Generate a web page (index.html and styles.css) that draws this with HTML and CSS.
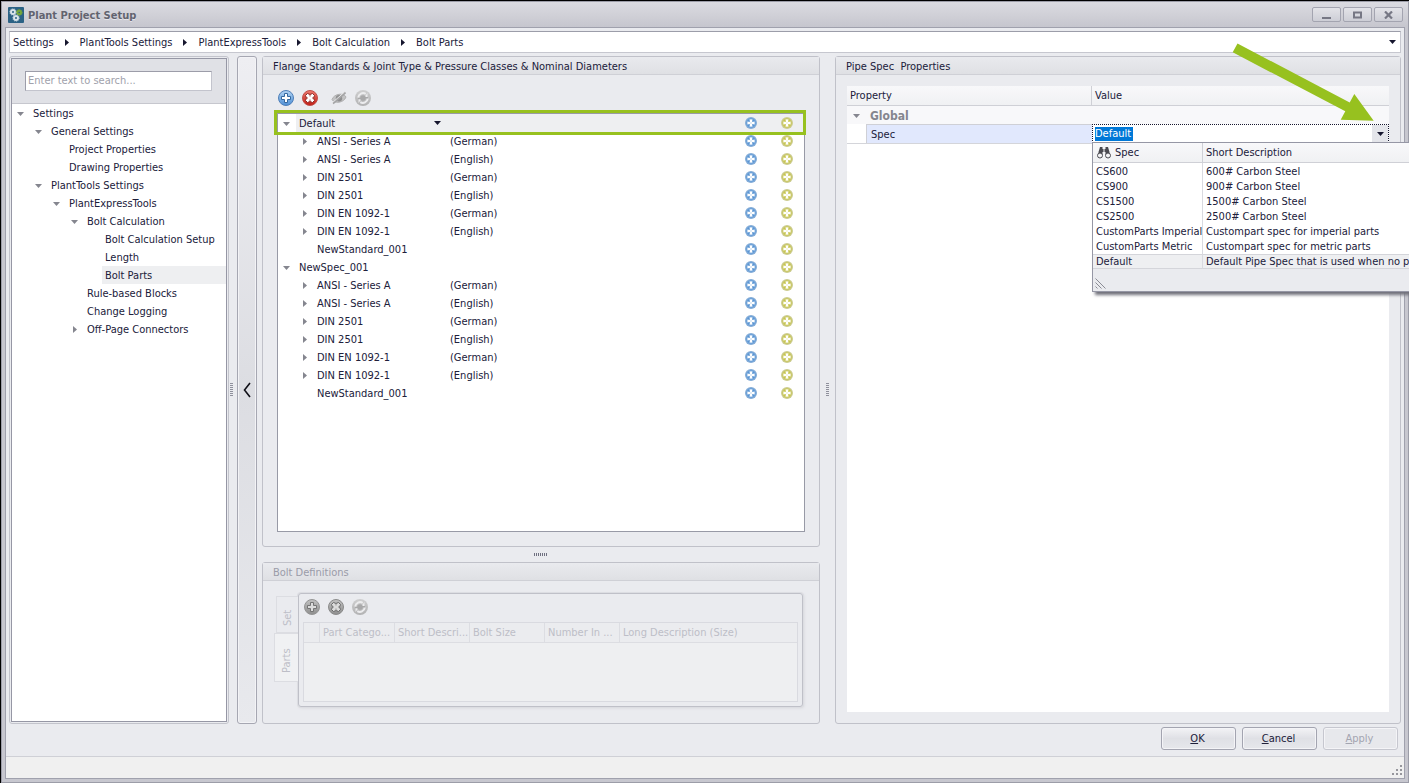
FILE: index.html
```html
<!DOCTYPE html>
<html lang="en">
<head>
<meta charset="utf-8">
<title>Plant Project Setup</title>
<link rel="stylesheet" href="styles.css">
</head>
<body>
<svg class="sprite" aria-hidden="true">
  <defs>
    <linearGradient id="gBlue" x1="0" y1="0" x2="0" y2="1"><stop offset="0" stop-color="#b4d4f3"/><stop offset="1" stop-color="#4d8fd6"/></linearGradient>
    <linearGradient id="gRed" x1="0" y1="0" x2="0" y2="1"><stop offset="0" stop-color="#ee7a70"/><stop offset="1" stop-color="#c01c14"/></linearGradient>
    <linearGradient id="gGray" x1="0" y1="0" x2="0" y2="1"><stop offset="0" stop-color="#c2c2c2"/><stop offset="1" stop-color="#8e8e8e"/></linearGradient>
    <linearGradient id="gPale" x1="0" y1="0" x2="0" y2="1"><stop offset="0" stop-color="#cfcfd0"/><stop offset="1" stop-color="#b2b2b3"/></linearGradient>
    <radialGradient id="gRowBlue"><stop offset="0" stop-color="#4484c8"/><stop offset="0.7" stop-color="#5a96d4"/><stop offset="1" stop-color="#7eaadb"/></radialGradient>
    <radialGradient id="gRowLime"><stop offset="0" stop-color="#bcba34"/><stop offset="0.7" stop-color="#c8c650"/><stop offset="1" stop-color="#cbca80"/></radialGradient>
  </defs>
  <symbol id="open" viewBox="0 0 7 4"><path d="M0 0h7L3.5 4z" fill="currentColor"/></symbol>
  <symbol id="closed" viewBox="0 0 4 7"><path d="M0 0v7l4-3.5z" fill="currentColor"/></symbol>
  <symbol id="plus" viewBox="0 0 16 16"><circle cx="8" cy="8" r="7.5" fill="url(#gBlue)" stroke="#4f7fb8"/><path d="M6.5 3.5h3v3h3v3h-3v3h-3v-3h-3v-3h3z" fill="#fff" stroke="#35689f"/></symbol>
  <symbol id="cross" viewBox="0 0 16 16"><circle cx="8" cy="8" r="7.5" fill="url(#gRed)" stroke="#c0504a"/><path d="M3.500 5.500L5.500 3.500 8 4.500 10.500 3.500 12.500 5.500 11.500 8 12.500 10.500 10.500 12.500 8 11.500 5.500 12.500 3.500 10.500 4.500 8z" fill="#fff" stroke="#8c2a26"/><path d="M8 4.500v2M8 11.500v-2M4.500 8h1.500M11.500 8h-1.500" stroke="#b8524c"/></symbol>
  <symbol id="plusGray" viewBox="0 0 16 16"><circle cx="8" cy="8" r="7.500" fill="url(#gGray)" stroke="#949494"/><path d="M6.500 3.500h3v3h3v3h-3v3h-3v-3h-3v-3h3z" fill="#dcdcdc" stroke="#757575"/></symbol>
  <symbol id="crossGray" viewBox="0 0 16 16"><circle cx="8" cy="8" r="7.500" fill="url(#gGray)" stroke="#8a8a8a"/><path d="M3.500 5.500L5.500 3.500 8 4.500 10.500 3.500 12.500 5.500 11.500 8 12.500 10.500 10.500 12.500 8 11.500 5.500 12.500 3.500 10.500 4.500 8z" fill="#dcdcdc" stroke="#686868"/><path d="M8 4.500v2M8 11.500v-2M4.500 8h1.500M11.500 8h-1.500" stroke="#909090"/></symbol>
  <symbol id="refresh" viewBox="0 0 16 16"><circle cx="8" cy="8" r="8" fill="url(#gPale)"/><path d="M3.200 7.500a4.900 4.900 0 0 1 7.500-3.600M12.800 8.500a4.900 4.900 0 0 1-7.500 3.600" fill="none" stroke="#ececee" stroke-width="2"/><path d="M12.500 3v4h-3zM3.500 13V9h3z" fill="#ececee"/><circle cx="8" cy="8" r="2.800" fill="#a9a9aa"/><path d="M9 7h4v1.200H9zM3 8h4v1.200H3z" fill="#a9a9aa"/></symbol>
  <symbol id="eyeOff" viewBox="0 0 16 16"><path d="M1 9.500c2-6 12-7 14-2.500-2 6-12 7-14 2.500z" fill="#c3c3c4" stroke="#b0b0b1"/><circle cx="8" cy="8.200" r="3.200" fill="#8f8f90"/><path d="M14.500 2.500L2 13.500" stroke="#a3a3a4" stroke-width="1.800"/><path d="M13.500 2L1 13" stroke="#e4e4e5"/></symbol>
  <symbol id="addBlue" viewBox="0 0 12 12"><circle cx="6" cy="6" r="6" fill="#86add6"/><circle cx="6" cy="6" r="5.200" fill="url(#gRowBlue)"/><path d="M4 2h4v2h2v4H8v2H4V8H2V4h2z" fill="#fff" fill-opacity=".3"/><path d="M5 2.500h2V5h2.500v2H7v2.500H5V7H2.500V5H5z" fill="#fff"/><path d="M5.500 5.500h1v1h-1z" fill="#8db6e0"/></symbol>
  <symbol id="addLime" viewBox="0 0 12 12"><circle cx="6" cy="6" r="6" fill="#cdcd96"/><circle cx="6" cy="6" r="5.200" fill="url(#gRowLime)"/><path d="M4 2h4v2h2v4H8v2H4V8H2V4h2z" fill="#fff" fill-opacity=".3"/><path d="M5 2.500h2V5h2.500v2H7v2.500H5V7H2.500V5H5z" fill="#fff"/><path d="M5.500 5.500h1v1h-1z" fill="#dbd98c"/></symbol>
  <symbol id="crumb" viewBox="0 0 4 7"><path d="M0 0v7l4-3.500z" fill="#16162e"/></symbol>
</svg>

<div class="window">
  <header class="titlebar">
    <svg class="app-icon" viewBox="0 0 16 16"><rect width="16" height="16" rx="1" fill="#2b6285"/><g fill="none" stroke-width="2"><circle cx="5" cy="5" r="2" stroke="#d9e4ea"/><circle cx="11.200" cy="5.500" r="1.800" stroke="#76a83a"/><circle cx="8" cy="11" r="2" stroke="#d9e4ea"/></g><g fill="none" stroke-dasharray="1 1" stroke-width="1"><circle cx="5" cy="5" r="3.200" stroke="#c5d5de"/><circle cx="11.200" cy="5.500" r="3" stroke="#76a83a"/><circle cx="8" cy="11" r="3.200" stroke="#c5d5de"/></g></svg>
    <h1>Plant Project Setup</h1>
    <div class="window-buttons">
      <button aria-label="Minimize"><svg width="10" height="8" viewBox="0 0 10 8"><path d="M0 6h9v2H0z" fill="#767784"/></svg></button>
      <button aria-label="Maximize"><svg width="10" height="8" viewBox="0 0 10 8"><path d="M1 1.500h7v5H1z" fill="none" stroke="#767784" stroke-width="2"/></svg></button>
      <button aria-label="Close"><svg width="10" height="8" viewBox="0 0 10 8"><path d="M1 .5l7 7M8 .5l-7 7" stroke="#767784" stroke-width="2.200"/></svg></button>
    </div>
  </header>

  <div class="client">
    <nav class="breadcrumb" aria-label="Breadcrumb">
      <a href="#">Settings</a><svg><use href="#crumb"/></svg>
      <a href="#">PlantTools Settings</a><svg><use href="#crumb"/></svg>
      <a href="#">PlantExpressTools</a><svg><use href="#crumb"/></svg>
      <a href="#">Bolt Calculation</a><svg><use href="#crumb"/></svg>
      <a href="#">Bolt Parts</a>
      <button class="crumb-menu" aria-label="History"><svg class="down"><use href="#open"/></svg></button>
    </nav>

    <main class="main">
      <aside class="nav-panel">
        <div class="nav-inner">
          <div class="search"><input type="text" placeholder="Enter text to search..." aria-label="Search settings"></div>
          <ul class="tree">
            <li class="node l1"><button class="exp" aria-label="Collapse"><svg class="down"><use href="#open"/></svg></button><a href="#">Settings</a></li>
            <li class="node l2"><button class="exp" aria-label="Collapse"><svg class="down"><use href="#open"/></svg></button><a href="#">General Settings</a></li>
            <li class="node l4"><a href="#">Project Properties</a></li>
            <li class="node l4"><a href="#">Drawing Properties</a></li>
            <li class="node l2"><button class="exp" aria-label="Collapse"><svg class="down"><use href="#open"/></svg></button><a href="#">PlantTools Settings</a></li>
            <li class="node l3"><button class="exp" aria-label="Collapse"><svg class="down"><use href="#open"/></svg></button><a href="#">PlantExpressTools</a></li>
            <li class="node l4"><button class="exp" aria-label="Collapse"><svg class="down"><use href="#open"/></svg></button><a href="#">Bolt Calculation</a></li>
            <li class="node l6"><a href="#">Bolt Calculation Setup</a></li>
            <li class="node l6"><a href="#">Length</a></li>
            <li class="node l6"><a href="#" class="current">Bolt Parts</a></li>
            <li class="node l5"><a href="#">Rule-based Blocks</a></li>
            <li class="node l5"><a href="#">Change Logging</a></li>
            <li class="node l4"><button class="exp shut" aria-label="Expand"><svg class="right"><use href="#closed"/></svg></button><a href="#">Off-Page Connectors</a></li>
          </ul>
        </div>
      </aside>

      <div class="split-v nav-split"><span class="grip-v"></span></div>
      <button class="collapse" aria-label="Collapse navigation"><svg width="8" height="16" viewBox="0 0 8 16"><path d="M7 1L1.500 8 7 15" fill="none" stroke="#101018" stroke-width="1.600"/></svg></button>

      <div class="center">
        <section class="group standards">
          <h2>Flange Standards &amp; Joint Type &amp; Pressure Classes &amp; Nominal Diameters</h2>
          <div class="standards-body">
            <div class="toolbar">
              <button aria-label="Add"><svg><use href="#plus"/></svg></button>
              <button aria-label="Delete"><svg><use href="#cross"/></svg></button>
              <button class="spaced" aria-label="Hide" disabled><svg><use href="#eyeOff"/></svg></button>
              <button aria-label="Refresh" disabled><svg><use href="#refresh"/></svg></button>
            </div>
            <div class="list">
              <div class="row focus"><div class="name l1"><button class="exp" aria-label="Collapse"><svg class="down"><use href="#open"/></svg></button><span>Default</span><button class="pick" aria-label="Choose spec"><svg class="down"><use href="#open"/></svg></button></div><span class="lang"></span><button aria-label="Add standard"><svg><use href="#addBlue"/></svg></button><button aria-label="Add copy"><svg><use href="#addLime"/></svg></button></div>
              <div class="row"><div class="name l2"><button class="exp shut" aria-label="Expand"><svg class="right"><use href="#closed"/></svg></button><span>ANSI - Series A</span></div><span class="lang">(German)</span><button aria-label="Add"><svg><use href="#addBlue"/></svg></button><button aria-label="Add copy"><svg><use href="#addLime"/></svg></button></div>
              <div class="row"><div class="name l2"><button class="exp shut" aria-label="Expand"><svg class="right"><use href="#closed"/></svg></button><span>ANSI - Series A</span></div><span class="lang">(English)</span><button aria-label="Add"><svg><use href="#addBlue"/></svg></button><button aria-label="Add copy"><svg><use href="#addLime"/></svg></button></div>
              <div class="row"><div class="name l2"><button class="exp shut" aria-label="Expand"><svg class="right"><use href="#closed"/></svg></button><span>DIN 2501</span></div><span class="lang">(German)</span><button aria-label="Add"><svg><use href="#addBlue"/></svg></button><button aria-label="Add copy"><svg><use href="#addLime"/></svg></button></div>
              <div class="row"><div class="name l2"><button class="exp shut" aria-label="Expand"><svg class="right"><use href="#closed"/></svg></button><span>DIN 2501</span></div><span class="lang">(English)</span><button aria-label="Add"><svg><use href="#addBlue"/></svg></button><button aria-label="Add copy"><svg><use href="#addLime"/></svg></button></div>
              <div class="row"><div class="name l2"><button class="exp shut" aria-label="Expand"><svg class="right"><use href="#closed"/></svg></button><span>DIN EN 1092-1</span></div><span class="lang">(German)</span><button aria-label="Add"><svg><use href="#addBlue"/></svg></button><button aria-label="Add copy"><svg><use href="#addLime"/></svg></button></div>
              <div class="row"><div class="name l2"><button class="exp shut" aria-label="Expand"><svg class="right"><use href="#closed"/></svg></button><span>DIN EN 1092-1</span></div><span class="lang">(English)</span><button aria-label="Add"><svg><use href="#addBlue"/></svg></button><button aria-label="Add copy"><svg><use href="#addLime"/></svg></button></div>
              <div class="row"><div class="name l3"><span>NewStandard_001</span></div><span class="lang"></span><button aria-label="Add"><svg><use href="#addBlue"/></svg></button><button aria-label="Add copy"><svg><use href="#addLime"/></svg></button></div>
              <div class="row"><div class="name l1"><button class="exp" aria-label="Collapse"><svg class="down"><use href="#open"/></svg></button><span>NewSpec_001</span></div><span class="lang"></span><button aria-label="Add standard"><svg><use href="#addBlue"/></svg></button><button aria-label="Add copy"><svg><use href="#addLime"/></svg></button></div>
              <div class="row"><div class="name l2"><button class="exp shut" aria-label="Expand"><svg class="right"><use href="#closed"/></svg></button><span>ANSI - Series A</span></div><span class="lang">(German)</span><button aria-label="Add"><svg><use href="#addBlue"/></svg></button><button aria-label="Add copy"><svg><use href="#addLime"/></svg></button></div>
              <div class="row"><div class="name l2"><button class="exp shut" aria-label="Expand"><svg class="right"><use href="#closed"/></svg></button><span>ANSI - Series A</span></div><span class="lang">(English)</span><button aria-label="Add"><svg><use href="#addBlue"/></svg></button><button aria-label="Add copy"><svg><use href="#addLime"/></svg></button></div>
              <div class="row"><div class="name l2"><button class="exp shut" aria-label="Expand"><svg class="right"><use href="#closed"/></svg></button><span>DIN 2501</span></div><span class="lang">(German)</span><button aria-label="Add"><svg><use href="#addBlue"/></svg></button><button aria-label="Add copy"><svg><use href="#addLime"/></svg></button></div>
              <div class="row"><div class="name l2"><button class="exp shut" aria-label="Expand"><svg class="right"><use href="#closed"/></svg></button><span>DIN 2501</span></div><span class="lang">(English)</span><button aria-label="Add"><svg><use href="#addBlue"/></svg></button><button aria-label="Add copy"><svg><use href="#addLime"/></svg></button></div>
              <div class="row"><div class="name l2"><button class="exp shut" aria-label="Expand"><svg class="right"><use href="#closed"/></svg></button><span>DIN EN 1092-1</span></div><span class="lang">(German)</span><button aria-label="Add"><svg><use href="#addBlue"/></svg></button><button aria-label="Add copy"><svg><use href="#addLime"/></svg></button></div>
              <div class="row"><div class="name l2"><button class="exp shut" aria-label="Expand"><svg class="right"><use href="#closed"/></svg></button><span>DIN EN 1092-1</span></div><span class="lang">(English)</span><button aria-label="Add"><svg><use href="#addBlue"/></svg></button><button aria-label="Add copy"><svg><use href="#addLime"/></svg></button></div>
              <div class="row"><div class="name l3"><span>NewStandard_001</span></div><span class="lang"></span><button aria-label="Add"><svg><use href="#addBlue"/></svg></button><button aria-label="Add copy"><svg><use href="#addLime"/></svg></button></div>
              <div class="highlight"></div>
            </div>
          </div>
        </section>

        <div class="split-h"><span class="grip-h"></span></div>

        <section class="group bolts">
          <h2>Bolt Definitions</h2>
          <div class="bolts-body">
            <div class="side-tabs" role="tablist">
              <button class="tab" role="tab" disabled>Set</button>
              <button class="tab active" role="tab" disabled>Parts</button>
            </div>
            <div class="tab-page">
              <div class="toolbar">
                <button aria-label="Add part" disabled><svg><use href="#plusGray"/></svg></button>
                <button aria-label="Delete part" disabled><svg><use href="#crossGray"/></svg></button>
                <button aria-label="Refresh parts" disabled><svg><use href="#refresh"/></svg></button>
              </div>
              <div class="parts">
                <table>
                  <thead><tr><th class="mark"></th><th>Part Catego...</th><th>Short Descri...</th><th>Bolt Size</th><th>Number In ...</th><th class="wide">Long Description (Size)</th></tr></thead>
                </table>
              </div>
            </div>
          </div>
        </section>
      </div>

      <div class="split-v"><span class="grip-v"></span></div>

      <section class="group props">
        <h2>Pipe Spec&nbsp; Properties</h2>
        <div class="props-body">
          <div class="grid">
            <div class="grid-head"><span>Property</span><span class="value-head">Value</span></div>
            <div class="category"><button class="exp" aria-label="Collapse"><svg class="down"><use href="#open"/></svg></button><strong>Global</strong></div>
            <div class="prop">
              <label for="spec">Spec</label>
              <div class="combo">
                <input id="spec" type="text" value="Default">
                <button aria-label="Open list"><svg class="down"><use href="#open"/></svg></button>
                <div class="popup">
                  <table>
                    <thead><tr><th class="key"><svg class="binoculars" viewBox="0 0 14 13"><path d="M3 1h2.500v2h3V1H11l1.500 5v3H8.500V6h-3v3h-4V6z" fill="#4a4a50"/><path d="M7 0v13" stroke="#f4f4f6"/><circle cx="3" cy="9.500" r="2.500" fill="#f4f4f6" stroke="#4a4a50"/><circle cx="11" cy="9.500" r="2.500" fill="#f4f4f6" stroke="#4a4a50"/></svg>Spec</th><th>Short Description</th></tr></thead>
                    <tbody>
                      <tr><td>CS600</td><td>600# Carbon Steel</td></tr>
                      <tr><td>CS900</td><td>900# Carbon Steel</td></tr>
                      <tr><td>CS1500</td><td>1500# Carbon Steel</td></tr>
                      <tr><td>CS2500</td><td>2500# Carbon Steel</td></tr>
                      <tr><td>CustomParts Imperial</td><td>Custompart spec for imperial parts</td></tr>
                      <tr><td>CustomParts Metric</td><td>Custompart spec for metric parts</td></tr>
                      <tr class="selected"><td>Default</td><td>Default Pipe Spec that is used when no pa</td></tr>
                    </tbody>
                  </table>
                  <div class="popup-foot"><svg width="11" height="11" viewBox="0 0 11 11"><path d="M0.500 0.500l10 10M0.500 4.500l6 6M0.500 8.500l2 2" stroke="#8a8b94" fill="none"/></svg></div>
                </div>
              </div>
            </div>
          </div>
        </div>
        <svg class="arrow" viewBox="0 0 143 79"><path d="M5.500 .5L117.700 59.500 122.300 51 141.700 77.700 108.700 76.700 113.300 68.300 .7 9.300z" fill="#97c11f"/></svg>
      </section>
    </main>

    <div class="actions">
      <button><u>O</u>K</button>
      <button><u>C</u>ancel</button>
      <button disabled><u>A</u>pply</button>
    </div>
    <footer class="status"><svg width="11" height="11" viewBox="0 0 11 11"><path d="M8 0h2v2H8zM4 4h2v2H4zM8 4h2v2H8zM0 8h2v2H0zM4 8h2v2H4zM8 8h2v2H8z" fill="#96969c"/></svg></footer>
  </div>
</div>
</body>
</html>
```

FILE: styles.css
```css
* { box-sizing: border-box; }

body {
  margin: 0;
  height: 100vh;
  overflow: hidden;
  border: solid #000;
  border-width: 1px 0 0 1px;
  font: 11px/20px "DejaVu Sans Condensed", "Noto Sans", sans-serif;
  color: #20203a;
}

button, input { font: inherit; color: inherit; }
button { padding: 0; border: 0; background: none; }
a { color: inherit; text-decoration: none; }
h1, h2, ul { margin: 0; padding: 0; font-size: inherit; }
svg { display: block; flex: none; }
.sprite { position: absolute; width: 0; height: 0; }
.down { width: 7px; height: 4px; }
.right { width: 4px; height: 7px; }

.window {
  display: flex;
  flex-direction: column;
  height: 100%;
  padding: 0 3px 3px;
  border: 1px solid #9c9da8;
  background: #c7c7cf;
}

.titlebar {
  display: flex;
  align-items: center;
  gap: 4px;
  height: 25px;
  margin: 0 -3px;
  padding: 0 5px 0 6px;
  background: linear-gradient(#dbdbe1, #c6c6ce);
}
.titlebar h1 { flex: 1; padding-top: 2px; color: #62636f; text-shadow: 0 1px #e4e4ea; }
.app-icon { width: 16px; height: 16px; }
.window-buttons { display: flex; gap: 2px; }
.window-buttons button {
  display: grid;
  place-items: center;
  width: 29px;
  height: 15px;
  border: 1px solid #a3a4b0;
  border-radius: 2px;
  background: linear-gradient(#e3e3e8, #cdced6);
}

.client {
  flex: 1;
  min-height: 0;
  display: flex;
  flex-direction: column;
  border: 1px solid #a0a1ad;
  background: #eaebef;
}

.breadcrumb {
  display: flex;
  align-items: center;
  height: 22px;
  margin: 3px;
  padding: 0 4px 0 3px;
  border: 1px solid #c6c7cf;
  border-top-color: #9c9da9;
  background: #fff;
}
.breadcrumb a { padding-top: 2px; }
.breadcrumb > svg { width: 4px; height: 7px; margin: 0 11px; }
.crumb-menu { margin-left: auto; color: #16162e; }

.main { flex: 1; min-height: 0; display: flex; padding: 0 3px; }

.nav-panel {
  flex: none;
  width: 220px;
  padding: 1px;
  border: 1px solid #c3c4cc;
  border-radius: 3px;
}
.nav-inner { height: 100%; border: 1px solid #9697a5; background: #fff; }
.search { padding: 12px 14px 12px 13px; background: #e0e1e6; border-bottom: 1px solid #c6c7ce; }
.search input {
  display: block;
  width: 100%;
  height: 20px;
  padding: 0 2px;
  border: 1px solid #c3c4cd;
  border-top-color: #9c9da9;
  border-left-color: #9c9da9;
  background: #fff;
}
.search input::placeholder { color: #a0a1ab; opacity: 1; }

.tree { list-style: none; }
.node { display: flex; height: 18px; }
.node a { flex: 1; padding-left: 3px; }
.node .current { background: #eeeff1; }
.exp { display: grid; place-items: center; flex: none; width: 18px; height: 18px; padding: 2px 1px 0 0; color: #85868f; }
.exp.shut { padding: 0; }
.l2 { padding-left: 18px; }
.l3 { padding-left: 36px; }
.l4 { padding-left: 54px; }
.l5 { padding-left: 72px; }
.l6 { padding-left: 90px; }

.split-v { flex: none; width: 15px; display: flex; align-items: center; justify-content: center; }
.split-v.nav-split { width: 8px; justify-content: flex-start; padding-left: 1px; }
.grip-v { width: 3px; height: 14px; background: repeating-linear-gradient(#8f909c 0 1px, transparent 1px 2px); }
.split-h { height: 15px; display: flex; align-items: center; justify-content: center; }
.grip-h { width: 14px; height: 3px; background: repeating-linear-gradient(90deg, #6f7080 0 1px, transparent 1px 2px); }

.collapse {
  flex: none;
  display: grid;
  place-items: center;
  width: 20px;
  margin-right: 5px;
  border: 1px solid #a6a7b2;
  border-radius: 3px;
  background: linear-gradient(#eeeef2, #dcdde2 50%, #e8e9ed);
  box-shadow: inset 0 0 0 1px #f3f3f6;
}

.center { flex: 559 1 0; min-width: 0; display: flex; flex-direction: column; }
.group { display: flex; flex-direction: column; border: 1px solid #c0c1c9; border-radius: 3px; }
.group h2 {
  height: 18px;
  padding-left: 10px;
  border-bottom: 1px solid #cfd0d6;
  background: linear-gradient(#e9eaee, #dfe0e4);
  font-weight: normal;
  white-space: nowrap;
}

.standards { flex: 1; min-height: 0; }
.standards-body { flex: 1; min-height: 0; display: flex; flex-direction: column; padding: 15px 14px 14px; }
.toolbar { display: flex; gap: 8px; padding-left: 1px; }
.toolbar svg { width: 16px; height: 16px; }
.toolbar .spaced { margin-left: 5px; }
.standards .toolbar { margin-bottom: 7px; }
.list { position: relative; flex: 1; min-height: 0; border: 1px solid #989aa6; background: #fff; }
.row { display: grid; grid-template: 18px / 168px 1fr 38px 34px; }
.row > button { display: grid; place-items: center; }
.row > button svg { width: 12px; height: 12px; }
.name { display: flex; white-space: nowrap; }
.name span { padding-left: 3px; }
.lang { padding-left: 4px; }
.focus { background: linear-gradient(90deg, #fff 18px, #eeeff1 18px); }
.pick { display: grid; place-items: center; height: 18px; margin: 0 5px 0 auto; color: #16162e; }
.highlight { position: absolute; top: -4px; left: -4px; right: -2px; height: 25px; border: 3px solid #97c11f; }

.bolts { height: 162px; color: #9a9ba8; }
.bolts-body { flex: 1; display: flex; padding: 12px 16px 16px 11px; color: #bdbec7; }
.side-tabs { flex: none; width: 24px; padding-top: 3px; display: flex; flex-direction: column; align-items: flex-end; }
.tab {
  width: 22px;
  height: 37px;
  padding-bottom: 6px;
  writing-mode: vertical-rl;
  rotate: 180deg;
  line-height: 16px;
  text-align: center;
  border: 1px solid #dcdde2;
  border-left: 0;
  background: #eaebef;
}
.tab.active { width: 24px; height: 49px; background: #f0f1f3; }
.tab-page {
  flex: 1;
  min-width: 0;
  display: flex;
  flex-direction: column;
  gap: 7px;
  padding: 5px 4px 4px;
  border: 1px solid #bfc0c8;
  border-radius: 3px;
  box-shadow: 0 0 0 1px #dcdde2, 1px 1px 3px #d4d5da;
}
.parts { flex: 1; border: 1px solid #d9dae0; background: #eeeff1; }
table { border-collapse: separate; border-spacing: 0; table-layout: fixed; width: 100%; }
th, td { padding: 0 3px; font-weight: normal; text-align: left; white-space: nowrap; overflow: hidden; }
th { padding-top: 1px; line-height: 18px; }
.parts th { width: 75px; height: 20px; border: solid #dcdde2; border-width: 0 1px 1px 0; background: #ebecef; }
.parts .mark { width: 16px; }
.parts .wide { width: auto; border-right: 0; }

.props { position: relative; flex: 565 1 0; min-width: 0; }
.props-body { flex: 1; padding: 11px; }
.grid { height: 100%; background: #fff; }
.grid-head {
  display: grid;
  grid-template: 19px / 244px 1fr;
  border-bottom: 1px solid #cfd0d6;
  background: linear-gradient(#f8f8fa, #f0f1f3);
}
.grid-head span { padding-left: 3px; }
.grid-head .value-head { border-left: 1px solid #cfd0d6; }
.category { display: flex; height: 18px; background: #f8f8fa; color: #85868f; font-size: 12px; }
.category .exp { width: 20px; }
.category strong { padding-left: 3px; }
.prop { display: grid; grid-template: 19px / 245px 1fr; border-bottom: 1px solid #d4d5da; }
.prop label { margin-left: 19px; padding-left: 4px; border: solid #cfd0d6; border-width: 1px 0 0 1px; background: #e1e8fd; }
.combo { position: relative; display: flex; border: 1px dotted #16162e; background: #fff; }
.combo input {
  flex: 1;
  min-width: 0;
  height: 17px;
  padding: 1px 2px 0;
  border: 0;
  outline: 0;
  color: #fff;
  background: linear-gradient(#0078d7, #0078d7) 2px 2px / 38px 14px no-repeat;
}
.combo button { display: grid; place-items: center; width: 16px; background: #e4e5ea; color: #16162e; }
.popup {
  position: absolute;
  top: 17px;
  left: -1px;
  right: -21px;
  border: 1px solid #9697a5;
  border-right: 0;
  background: #fff;
  box-shadow: 3px 3px 3px #70707a;
}
.popup th { height: 20px; border: solid #cfd0d6; border-width: 0 1px 1px 0; background: linear-gradient(#f8f8fa, #f0f1f3); }
.popup .key { width: 110px; }
.popup tbody { border-top: 1px solid #fff; }
.popup td { height: 15px; padding-right: 0; line-height: 15px; border-right: 1px solid #d9dae0; }
.popup tbody tr:first-child td { height: 16px; padding-top: 1px; }
.popup td:last-child, .popup th:last-child { border-right: 0; padding-right: 0; }
.popup .selected td { background: #eeeff1; border-top: 1px solid #d4d5da; border-bottom: 1px solid #d4d5da; line-height: 13px; }
.binoculars { display: inline-block; width: 14px; height: 13px; margin: 0 4px 0 1px; vertical-align: -3px; }
.popup-foot { display: flex; align-items: flex-end; height: 22px; padding: 0 2px 2px; background: #eaebef; }
.arrow { position: absolute; top: -14px; right: 25px; width: 143px; height: 79px; }

.actions { display: flex; justify-content: flex-end; gap: 6px; padding: 3px 6px 6px; }
.actions button {
  width: 75px;
  height: 23px;
  padding: 1px 2px 0 0;
  border: 1px solid #a3a4b0;
  border-radius: 3px;
  background: linear-gradient(#f3f3f6, #dfe0e5 50%, #e6e7eb);
  box-shadow: inset 0 0 0 1px #f4f4f7;
}
.actions button:disabled { color: #a3a4b0; border-color: #c6c7cf; background: #e7e8ec; }
.status {
  display: flex;
  align-items: flex-end;
  justify-content: flex-end;
  height: 22px;
  padding: 0 1px 2px;
  border-top: 1px solid #cfd0d6;
  background: #f0f0f0;
}
```
